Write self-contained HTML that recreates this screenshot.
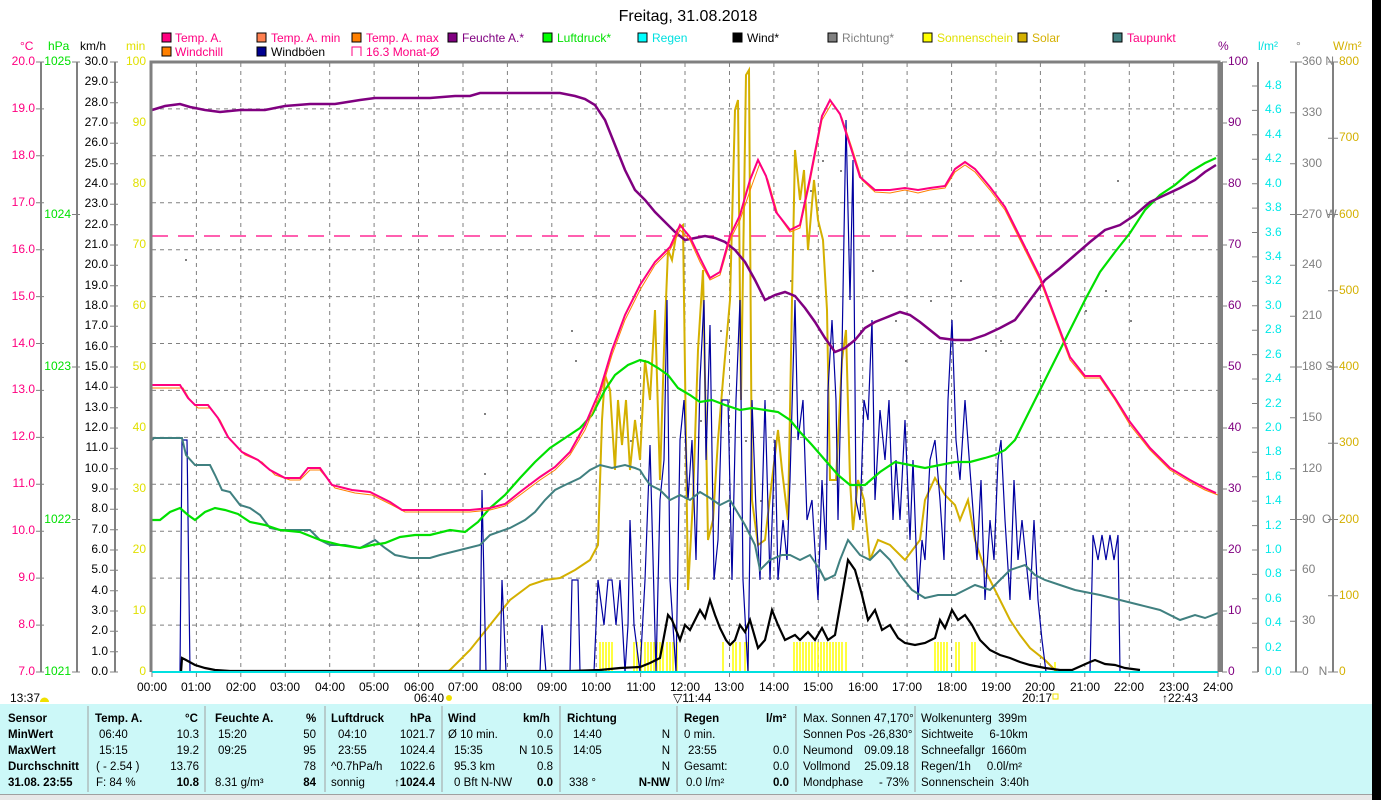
<!DOCTYPE html>
<html><head><meta charset="utf-8"><style>
html,body{margin:0;padding:0;background:#fff;width:1381px;height:800px;overflow:hidden}
svg{display:block}
text{font-family:"Liberation Sans",sans-serif;font-size:12px}
.tb text{font-size:11.5px}
</style></head><body>
<svg width="1381" height="800" viewBox="0 0 1381 800" xmlns="http://www.w3.org/2000/svg">
<rect x="1372" y="0" width="9" height="800" fill="#000"/>
<text x="688" y="21" text-anchor="middle" style="font-size:16px">Freitag, 31.08.2018</text>
<g style="font-size:11.5px">
<rect x="162" y="33" width="9" height="9" fill="#ff0080" stroke="#000"/><text x="175" y="42" fill="#ff0080">Temp. A.</text>
<rect x="257" y="33" width="9" height="9" fill="#ff8050" stroke="#000"/><text x="271" y="42" fill="#ff0080">Temp. A. min</text>
<rect x="352" y="33" width="9" height="9" fill="#ff8000" stroke="#000"/><text x="366" y="42" fill="#ff0080">Temp. A. max</text>
<rect x="448" y="33" width="9" height="9" fill="#800080" stroke="#000"/><text x="462" y="42" fill="#800080">Feuchte A.*</text>
<rect x="543" y="33" width="9" height="9" fill="#00ff00" stroke="#000"/><text x="557" y="42" fill="#00e000">Luftdruck*</text>
<rect x="638" y="33" width="9" height="9" fill="#00ffff" stroke="#000"/><text x="652" y="42" fill="#00e0e0">Regen</text>
<rect x="733" y="33" width="9" height="9" fill="#000" stroke="#000"/><text x="747" y="42">Wind*</text>
<rect x="828" y="33" width="9" height="9" fill="#808080" stroke="#000"/><text x="842" y="42" fill="#808080">Richtung*</text>
<rect x="923" y="33" width="9" height="9" fill="#ffff00" stroke="#000"/><text x="937" y="42" fill="#e0e000">Sonnenschein</text>
<rect x="1018" y="33" width="9" height="9" fill="#d4b000" stroke="#000"/><text x="1032" y="42" fill="#d4b000">Solar</text>
<rect x="1113" y="33" width="9" height="9" fill="#408080" stroke="#000"/><text x="1127" y="42" fill="#ff0080">Taupunkt</text>
<rect x="162" y="47" width="9" height="9" fill="#ff8000" stroke="#000"/><text x="175" y="56" fill="#ff0080">Windchill</text>
<rect x="257" y="47" width="9" height="9" fill="#000090" stroke="#000"/><text x="271" y="56">Windböen</text>
<path d="M352 56V47h9v9" fill="none" stroke="#ff0080"/><text x="366" y="56" fill="#ff0080">16.3 Monat-Ø</text>
</g>
<g style="font-size:11.5px">
<text x="20" y="50" fill="#ff0080">°C</text><text x="48" y="50" fill="#00e000">hPa</text><text x="80" y="50">km/h</text><text x="126" y="50" fill="#e0e000">min</text>
<text x="1218" y="50" fill="#800080">%</text><text x="1258" y="50" fill="#00e0e0">l/m²</text><text x="1296" y="50" fill="#808080">°</text><text x="1333" y="50" fill="#d4b000">W/m²</text>
</g>
<g stroke="#808080" stroke-width="2" fill="none">
<path d="M41 62V672M77 62V672M115 62V672M1258 62V672M1296 62V672M1333 62V672"/>
<path d="M36 62h8M36 108.9h8M36 155.8h8M36 202.8h8M36 249.7h8M36 296.6h8M36 343.5h8M36 390.4h8M36 437.4h8M36 484.3h8M36 531.2h8M36 578.1h8M36 625.1h8M36 672h8" stroke-width="1"/>
<path d="M72 62h8M72 214.5h8M72 367h8M72 519.5h8M72 672h8" stroke-width="1"/>
<path d="M1290 62h12M1290 112.8h6M1290 163.7h6M1290 214.5h12M1290 265.3h6M1290 316.2h6M1290 367h12M1290 417.8h6M1290 468.7h6M1290 519.5h12M1290 570.3h6M1290 621.2h6M1290 672h12" stroke-width="1"/>
<path d="M1328 62h10M1328 138.3h10M1328 214.5h10M1328 290.8h10M1328 367h10M1328 443.3h10M1328 519.5h10M1328 595.8h10M1328 672h10" stroke-width="1"/>
</g>
<g fill="#ff0080" text-anchor="end" dominant-baseline="middle">
<text x="35" y="62">20.0</text><text x="35" y="109">19.0</text><text x="35" y="156">18.0</text><text x="35" y="203">17.0</text><text x="35" y="250">16.0</text><text x="35" y="297">15.0</text><text x="35" y="344">14.0</text><text x="35" y="390">13.0</text><text x="35" y="437">12.0</text><text x="35" y="484">11.0</text><text x="35" y="531">10.0</text><text x="35" y="578">9.0</text><text x="35" y="625">8.0</text><text x="35" y="672">7.0</text>
</g>
<g fill="#00e000" text-anchor="end" dominant-baseline="middle">
<text x="71" y="62">1025</text><text x="71" y="215">1024</text><text x="71" y="367">1023</text><text x="71" y="520">1022</text><text x="71" y="672">1021</text>
</g>
<g text-anchor="end" dominant-baseline="middle">
<path d="M110 62h8M110 82.3h8M110 102.7h8M110 123h8M110 143.3h8M110 163.7h8M110 184h8M110 204.3h8M110 224.7h8M110 245h8M110 265.3h8M110 285.7h8M110 306h8M110 326.3h8M110 346.7h8M110 367h8M110 387.3h8M110 407.7h8M110 428h8M110 448.3h8M110 468.7h8M110 489h8M110 509.3h8M110 529.7h8M110 550h8M110 570.3h8M110 590.7h8M110 611h8M110 631.3h8M110 651.7h8M110 672h8" stroke="#808080"/>
<text x="108" y="62">30.0</text><text x="108" y="82">29.0</text><text x="108" y="103">28.0</text><text x="108" y="123">27.0</text><text x="108" y="143">26.0</text><text x="108" y="164">25.0</text><text x="108" y="184">24.0</text><text x="108" y="204">23.0</text><text x="108" y="225">22.0</text><text x="108" y="245">21.0</text><text x="108" y="265">20.0</text><text x="108" y="286">19.0</text><text x="108" y="306">18.0</text><text x="108" y="326">17.0</text><text x="108" y="347">16.0</text><text x="108" y="367">15.0</text><text x="108" y="387">14.0</text><text x="108" y="408">13.0</text><text x="108" y="428">12.0</text><text x="108" y="448">11.0</text><text x="108" y="469">10.0</text><text x="108" y="489">9.0</text><text x="108" y="509">8.0</text><text x="108" y="530">7.0</text><text x="108" y="550">6.0</text><text x="108" y="570">5.0</text><text x="108" y="591">4.0</text><text x="108" y="611">3.0</text><text x="108" y="631">2.0</text><text x="108" y="652">1.0</text><text x="108" y="672">0.0</text>
</g>
<g fill="#e0e000" text-anchor="end" dominant-baseline="middle">
<text x="146" y="62">100</text><text x="146" y="123">90</text><text x="146" y="184">80</text><text x="146" y="245">70</text><text x="146" y="306">60</text><text x="146" y="367">50</text><text x="146" y="428">40</text><text x="146" y="489">30</text><text x="146" y="550">20</text><text x="146" y="611">10</text><text x="146" y="672">0</text>
</g>
<g fill="#800080" dominant-baseline="middle">
<path d="M1222 62h5M1222 123h5M1222 184h5M1222 245h5M1222 306h5M1222 367h5M1222 428h5M1222 489h5M1222 550h5M1222 611h5M1222 672h5" stroke="#808080"/>
<text x="1228" y="62">100</text><text x="1228" y="123">90</text><text x="1228" y="184">80</text><text x="1228" y="245">70</text><text x="1228" y="306">60</text><text x="1228" y="367">50</text><text x="1228" y="428">40</text><text x="1228" y="489">30</text><text x="1228" y="550">20</text><text x="1228" y="611">10</text><text x="1228" y="672">0</text>
</g>
<g fill="#00e8e8" dominant-baseline="middle">
<path d="M1252 86h6M1252 110.4h6M1252 134.8h6M1252 159.3h6M1252 183.7h6M1252 208.1h6M1252 232.5h6M1252 256.9h6M1252 281.4h6M1252 305.8h6M1252 330.2h6M1252 354.6h6M1252 379h6M1252 403.5h6M1252 427.9h6M1252 452.3h6M1252 476.7h6M1252 501.1h6M1252 525.6h6M1252 550h6M1252 574.4h6M1252 598.8h6M1252 623.2h6M1252 647.7h6M1252 672h6" stroke="#808080"/>
<text x="1265" y="86">4.8</text><text x="1265" y="110">4.6</text><text x="1265" y="135">4.4</text><text x="1265" y="159">4.2</text><text x="1265" y="184">4.0</text><text x="1265" y="208">3.8</text><text x="1265" y="233">3.6</text><text x="1265" y="257">3.4</text><text x="1265" y="281">3.2</text><text x="1265" y="306">3.0</text><text x="1265" y="330">2.8</text><text x="1265" y="355">2.6</text><text x="1265" y="379">2.4</text><text x="1265" y="404">2.2</text><text x="1265" y="428">2.0</text><text x="1265" y="452">1.8</text><text x="1265" y="477">1.6</text><text x="1265" y="501">1.4</text><text x="1265" y="526">1.2</text><text x="1265" y="550">1.0</text><text x="1265" y="574">0.8</text><text x="1265" y="599">0.6</text><text x="1265" y="623">0.4</text><text x="1265" y="648">0.2</text><text x="1265" y="672">0.0</text>
</g>
<g fill="#808080" dominant-baseline="middle">
<text x="1302" y="62">360 N</text><text x="1302" y="113">330</text><text x="1302" y="164">300</text><text x="1302" y="215">270 W</text><text x="1302" y="265">240</text><text x="1302" y="316">210</text><text x="1302" y="367">180 S</text><text x="1302" y="418">150</text><text x="1302" y="469">120</text><text x="1302" y="520">90&#160;&#160;O</text><text x="1302" y="570">60</text><text x="1302" y="621">30</text><text x="1302" y="672">0&#160;&#160;&#160;N</text>
</g>
<g fill="#d4b000" dominant-baseline="middle">
<text x="1339" y="62">800</text><text x="1339" y="138">700</text><text x="1339" y="215">600</text><text x="1339" y="291">500</text><text x="1339" y="367">400</text><text x="1339" y="443">300</text><text x="1339" y="520">200</text><text x="1339" y="596">100</text><text x="1339" y="672">0</text>
</g>
<g stroke="#808080" stroke-dasharray="4,4" stroke-width="1">
<path d="M196.4 63V672M240.8 63V672M285.3 63V672M329.7 63V672M374.1 63V672M418.5 63V672M463 63V672M507.4 63V672M551.8 63V672M596.2 63V672M640.6 63V672M685 63V672M729.5 63V672M773.9 63V672M818.3 63V672M862.7 63V672M907.1 63V672M951.6 63V672M996 63V672M1040.4 63V672M1084.8 63V672M1129.3 63V672M1173.7 63V672"/>
<path d="M152 108.9H1218M152 155.8H1218M152 202.8H1218M152 249.7H1218M152 296.6H1218M152 343.5H1218M152 390.4H1218M152 437.4H1218M152 484.3H1218M152 531.2H1218M152 578.1H1218M152 625.1H1218"/>
</g>
<path d="M152 236H1218" stroke="#ff0080" stroke-dasharray="16,10" stroke-width="1.2"/>
<!-- direction dots -->
<g fill="#808080">
<rect x="185" y="259" width="2" height="2"/><rect x="484" y="413" width="2" height="2"/><rect x="484" y="473" width="2" height="2"/><rect x="571" y="330" width="2" height="2"/><rect x="575" y="360" width="2" height="2"/><rect x="610" y="380" width="2" height="2"/><rect x="630" y="440" width="2" height="2"/><rect x="665" y="310" width="2" height="2"/><rect x="700" y="420" width="2" height="2"/><rect x="720" y="330" width="2" height="2"/><rect x="745" y="440" width="2" height="2"/><rect x="760" y="500" width="2" height="2"/><rect x="790" y="280" width="2" height="2"/><rect x="810" y="190" width="2" height="2"/><rect x="822" y="160" width="2" height="2"/><rect x="840" y="170" width="2" height="2"/><rect x="860" y="330" width="2" height="2"/><rect x="872" y="270" width="2" height="2"/><rect x="895" y="320" width="2" height="2"/><rect x="905" y="360" width="2" height="2"/><rect x="930" y="300" width="2" height="2"/><rect x="960" y="280" width="2" height="2"/><rect x="985" y="350" width="2" height="2"/><rect x="1000" y="340" width="2" height="2"/><rect x="1040" y="380" width="2" height="2"/><rect x="1085" y="310" width="2" height="2"/><rect x="1105" y="290" width="2" height="2"/><rect x="1117" y="180" width="2" height="2"/><rect x="1130" y="320" width="2" height="2"/>
</g>
<g stroke="#808080"><path d="M152 672v5M196.4 672v5M240.8 672v5M285.3 672v5M329.7 672v5M374.1 672v5M418.5 672v5M463 672v5M507.4 672v5M551.8 672v5M596.2 672v5M640.6 672v5M685 672v5M729.5 672v5M773.9 672v5M818.3 672v5M862.7 672v5M907.1 672v5M951.6 672v5M996 672v5M1040.4 672v5M1084.8 672v5M1129.3 672v5M1173.7 672v5M1218 672v5"/></g>
<g text-anchor="middle"><text x="152" y="691">00:00</text><text x="196" y="691">01:00</text><text x="241" y="691">02:00</text><text x="285" y="691">03:00</text><text x="330" y="691">04:00</text><text x="374" y="691">05:00</text><text x="419" y="691">06:00</text><text x="463" y="691">07:00</text><text x="507" y="691">08:00</text><text x="552" y="691">09:00</text><text x="596" y="691">10:00</text><text x="641" y="691">11:00</text><text x="685" y="691">12:00</text><text x="729" y="691">13:00</text><text x="774" y="691">14:00</text><text x="818" y="691">15:00</text><text x="863" y="691">16:00</text><text x="907" y="691">17:00</text><text x="952" y="691">18:00</text><text x="996" y="691">19:00</text><text x="1040" y="691">20:00</text><text x="1085" y="691">21:00</text><text x="1129" y="691">22:00</text><text x="1174" y="691">23:00</text><text x="1218" y="691">24:00</text></g>
<g style="font-size:11.5px"><text x="10" y="702">13:37</text><path d="M40 702a4 4 0 0 1 9 0z" fill="#f0e000"/>
<text x="414" y="702">06:40</text><circle cx="449" cy="698" r="3" fill="#f0e000"/>
<text x="673" y="702">▽11:44</text><text x="1022" y="702">20:17</text><rect x="1053" y="694" width="5" height="5" fill="none" stroke="#f0e000"/><text x="1162" y="702" fill="#000">↑22:43</text></g>
<g stroke="#ffff00" stroke-width="1.5">
<path d="M600 642v30M603 642v30M606 642v30M609 642v30M612 642v30M634 642v30M637 642v30M641 642v30M645 642v30M648 642v30M651 642v30M654 642v30M657 642v30M660 642v30M663 642v30M667 642v30M670 642v30M673 642v30M677 642v30M723 642v30M733 642v30M736 642v30M740 642v30M745 642v30M748 642v30M794 642v30M797 642v30M800 642v30M803 642v30M806 642v30M809 642v30M812 642v30M815 642v30M818 642v30M821 642v30M824 642v30M827 642v30M830 642v30M833 642v30M836 642v30M839 642v30M842 642v30M846 642v30M935 642v30M938 642v30M941 642v30M944 642v30M947 642v30M956 642v30M959 642v30M972 642v30M975 642v30M1055 662v10"/>
</g>
<polyline fill="none" stroke="#d4b000" stroke-width="2" points="447,672 450,670 470,650 490,625 510,600 530,585 545,580 560,578 575,570 590,560 598,545 602,420 605,375 610,390 615,470 618,400 622,445 626,400 630,470 635,420 640,460 645,360 650,400 655,310 660,480 664,350 668,250 672,260 677,230 683,225 688,590 693,500 698,350 703,270 708,540 713,520 718,440 723,380 730,300 735,110 738,100 741,400 746,75 749,70 752,500 758,545 765,540 772,480 778,430 782,470 788,520 792,300 795,150 800,200 804,170 808,250 814,180 818,220 823,240 827,310 830,480 836,480 842,360 846,330 850,480 853,530 858,480 864,500 870,560 878,540 890,545 905,560 920,540 925,500 935,478 945,495 955,505 960,520 968,500 975,540 985,570 1000,600 1010,620 1020,635 1030,648 1045,660 1057,672"/>
<polyline fill="none" stroke="#0000a0" stroke-width="1.2" points="152,672 180,672 182,440 187,440 190,672 480,672 482,490 486,672 500,672 502,580 506,672 540,672 542,625 546,672 570,672 572,580 578,580 580,672 594,672 598,580 604,625 608,580 612,580 616,625 620,580 625,672 628,625 630,520 634,625 640,672 645,580 650,445 656,672 660,500 664,460 667,300 670,580 676,672 680,440 684,400 688,500 692,440 696,560 700,380 704,300 706,460 710,325 714,580 718,540 722,400 728,400 732,580 736,400 740,300 743,580 748,672 752,400 756,510 760,580 765,400 770,580 775,440 778,580 783,520 787,560 790,480 795,300 798,440 803,400 807,520 812,500 818,600 822,480 826,550 828,390 832,320 836,400 838,520 842,350 846,120 850,300 853,160 856,500 860,520 864,400 868,420 872,320 875,500 880,410 885,460 889,400 893,520 896,460 900,520 905,420 910,540 913,460 918,600 922,540 925,560 930,460 935,440 940,500 944,560 948,400 952,320 956,440 960,480 965,400 970,470 973,510 977,560 981,480 985,600 990,520 994,560 998,460 1001,440 1005,520 1010,600 1014,480 1018,560 1022,520 1026,560 1030,600 1034,520 1038,600 1042,640 1046,672 1090,672 1093,535 1098,560 1102,535 1106,560 1110,535 1114,560 1118,535 1120,672 1218,672"/>
<polyline fill="none" stroke="#408080" stroke-width="2" points="152,440 154,438 182,438 186,455 195,465 210,465 215,475 222,490 230,492 240,505 250,508 260,515 270,528 280,530 295,530 310,530 320,540 330,545 345,545 360,548 375,540 385,548 395,555 410,558 430,558 440,555 460,550 480,545 490,535 510,528 525,520 535,512 545,500 555,490 565,485 580,478 590,470 600,465 612,468 625,465 635,468 640,470 645,478 650,485 660,490 670,500 680,495 690,500 700,492 710,498 720,505 730,500 745,525 755,545 760,570 770,560 782,555 790,555 800,560 810,555 820,570 825,580 835,575 840,560 848,540 852,545 860,555 870,560 880,550 890,560 900,575 912,590 925,598 938,595 955,595 965,590 975,585 990,590 1000,580 1010,570 1025,565 1035,575 1045,580 1060,585 1075,590 1100,595 1120,600 1140,605 1160,610 1180,620 1195,615 1205,618 1218,613"/>
<polyline fill="none" stroke="#00e000" stroke-width="2.2" points="152,520 160,520 170,512 180,508 188,515 195,520 205,512 215,508 225,510 238,514 250,522 265,525 280,530 300,532 320,540 340,545 360,548 372,545 385,543 400,537 415,535 430,535 450,530 465,532 478,522 490,508 505,495 520,478 535,462 550,448 565,438 580,428 592,415 605,390 615,375 628,365 640,360 648,362 658,368 668,375 678,388 690,395 700,402 712,400 725,405 740,410 752,408 765,410 778,412 790,420 800,432 812,445 825,460 838,475 850,485 865,485 880,472 895,462 910,465 925,468 940,465 955,462 970,462 985,458 995,455 1005,450 1015,440 1025,420 1040,390 1055,360 1070,330 1085,300 1100,272 1115,252 1130,233 1145,210 1160,195 1175,185 1190,172 1205,163 1216,158"/>
<polyline fill="none" stroke="#800080" stroke-width="2.5" points="152,110 165,106 180,104 190,107 205,110 220,112 240,110 265,110 285,106 310,104 335,104 360,100 375,98 400,98 430,98 455,96 470,96 480,93 500,93 530,93 560,93 575,96 585,99 595,105 605,120 615,145 625,170 635,190 645,200 655,212 665,222 675,232 685,240 695,238 705,236 715,238 725,242 735,250 745,262 755,280 765,300 775,295 785,292 795,296 805,308 815,322 825,338 835,352 845,348 855,340 865,328 875,322 885,318 900,312 910,315 920,322 930,330 940,338 955,340 970,340 985,335 1000,328 1015,320 1030,300 1045,280 1060,268 1075,255 1090,242 1105,230 1120,225 1135,215 1150,202 1165,195 1180,188 1195,180 1205,172 1216,165"/>
<g fill="none">
<polyline stroke="#ff8000" stroke-width="1" points="152,388 183,388 190,400 198,408 210,408 220,420 230,440 245,455 262,462 275,475 290,480 300,480 310,470 320,470 335,488 355,493 372,495 382,500 392,505 405,512 420,512 445,512 455,512 470,512 490,510 505,506 520,495 540,480 555,470 570,455 585,430 600,395 612,355 625,320 640,290 655,265 670,250 680,230 690,240 700,262 710,280 720,275 730,240 740,220 752,185 760,163 768,180 778,215 790,232 800,228 810,182 822,120 832,103 842,118 852,148 862,180 875,192 890,193 905,190 918,193 930,190 945,188 955,172 965,165 975,172 990,190 1005,210 1020,240 1040,280 1055,320 1070,360 1085,378 1100,378 1115,400 1130,425 1150,450 1170,470 1190,482 1205,490 1218,495"/>
<polyline stroke="#ff0080" stroke-width="2" points="152,385 180,385 188,398 195,405 208,405 218,418 228,437 242,452 258,460 270,470 285,478 300,478 308,468 320,468 332,485 352,490 370,492 380,497 390,502 402,510 420,510 445,510 455,510 470,510 490,508 505,504 520,492 540,477 555,467 570,452 585,425 600,390 612,350 625,315 640,285 655,262 670,247 680,225 690,237 700,258 710,278 720,272 730,236 740,215 750,180 758,160 766,176 776,212 790,230 800,225 810,178 822,116 830,100 840,114 850,145 860,177 875,190 890,190 905,188 918,190 930,188 945,186 955,169 965,162 975,169 990,187 1005,207 1020,237 1040,277 1055,317 1070,357 1085,376 1100,376 1115,398 1130,422 1150,448 1170,468 1190,480 1205,488 1216,493"/>
</g>
<polyline fill="none" stroke="#000" stroke-width="2.2" points="181,672 182,658 186,660 195,665 205,668 215,670 230,671 570,671 600,670 620,668 640,667 650,663 660,658 668,615 672,620 680,640 685,625 690,630 700,610 705,618 710,600 715,615 720,628 726,640 730,645 735,640 740,625 745,632 750,620 758,648 765,640 772,610 778,625 785,640 795,635 800,640 808,632 815,640 822,628 828,640 835,635 842,595 848,560 855,570 862,595 868,620 875,610 882,630 890,625 898,638 905,643 915,645 925,643 935,638 940,620 945,628 952,610 958,620 965,615 972,625 980,640 990,650 1000,655 1010,658 1020,662 1030,665 1045,668 1060,670 1072,670 1090,662 1095,660 1105,664 1115,665 1125,668 1140,670"/>
<path d="M152 672H1218" stroke="#00e0e0" stroke-width="2"/>
<path d="M151 672V62H1219V672M1221.5 62V672" fill="none" stroke="#808080" stroke-width="3"/>
<rect x="0" y="704" width="1372" height="90" fill="#ccf8f8"/>
<rect x="0" y="794" width="1372" height="6" fill="#e8e8e8"/>
<path d="M0 794.5H1372" stroke="#a0a0a0"/>
<g stroke="#a0a0a0"><path d="M88 706V792M205 706V792M325 706V792M442 706V792M560 706V792M677 706V792M796 706V792M915 706V792"/></g>
<g class="tb">
<g font-weight="bold"><text x="8" y="722">Sensor</text><text x="8" y="738">MinWert</text><text x="8" y="754">MaxWert</text><text x="8" y="770">Durchschnitt</text><text x="8" y="786">31.08. 23:55</text>
<text x="95" y="722">Temp. A.</text><text x="185" y="722">°C</text><text x="215" y="722">Feuchte A.</text><text x="306" y="722">%</text><text x="331" y="722">Luftdruck</text><text x="410" y="722">hPa</text><text x="448" y="722">Wind</text><text x="523" y="722">km/h</text><text x="567" y="722">Richtung</text><text x="684" y="722">Regen</text><text x="766" y="722">l/m²</text></g>
<text x="99" y="738">06:40</text><text x="199" y="738" text-anchor="end">10.3</text>
<text x="99" y="754">15:15</text><text x="199" y="754" text-anchor="end">19.2</text>
<text x="96" y="770">( - 2.54 )</text><text x="199" y="770" text-anchor="end">13.76</text>
<text x="96" y="786">F: 84 %</text><text x="199" y="786" text-anchor="end" font-weight="bold">10.8</text>
<text x="218" y="738">15:20</text><text x="316" y="738" text-anchor="end">50</text>
<text x="218" y="754">09:25</text><text x="316" y="754" text-anchor="end">95</text>
<text x="316" y="770" text-anchor="end">78</text>
<text x="215" y="786">8.31 g/m³</text><text x="316" y="786" text-anchor="end" font-weight="bold">84</text>
<text x="338" y="738">04:10</text><text x="435" y="738" text-anchor="end">1021.7</text>
<text x="338" y="754">23:55</text><text x="435" y="754" text-anchor="end">1024.4</text>
<text x="331" y="770">^0.7hPa/h</text><text x="435" y="770" text-anchor="end">1022.6</text>
<text x="331" y="786">sonnig</text><text x="435" y="786" text-anchor="end" font-weight="bold">↑1024.4</text>
<text x="448" y="738">Ø 10 min.</text><text x="553" y="738" text-anchor="end">0.0</text>
<text x="454" y="754">15:35</text><text x="553" y="754" text-anchor="end">N 10.5</text>
<text x="454" y="770">95.3 km</text><text x="553" y="770" text-anchor="end">0.8</text>
<text x="454" y="786">0 Bft N-NW</text><text x="553" y="786" text-anchor="end" font-weight="bold">0.0</text>
<text x="573" y="738">14:40</text><text x="670" y="738" text-anchor="end">N</text>
<text x="573" y="754">14:05</text><text x="670" y="754" text-anchor="end">N</text>
<text x="670" y="770" text-anchor="end">N</text>
<text x="569" y="786">338 °</text><text x="670" y="786" text-anchor="end" font-weight="bold">N-NW</text>
<text x="684" y="738">0 min.</text>
<text x="688" y="754">23:55</text><text x="789" y="754" text-anchor="end">0.0</text>
<text x="684" y="770">Gesamt:</text><text x="789" y="770" text-anchor="end">0.0</text>
<text x="686" y="786">0.0 l/m²</text><text x="789" y="786" text-anchor="end" font-weight="bold">0.0</text>
<text x="803" y="722">Max. Sonnen 47,170°</text>
<text x="803" y="738">Sonnen Pos -26,830°</text>
<text x="803" y="754">Neumond</text><text x="909" y="754" text-anchor="end">09.09.18</text>
<text x="803" y="770">Vollmond</text><text x="909" y="770" text-anchor="end">25.09.18</text>
<text x="803" y="786">Mondphase</text><text x="909" y="786" text-anchor="end">- 73%</text>
<text x="921" y="722">Wolkenunterg&#160;&#160;399m</text>
<text x="921" y="738">Sichtweite&#160;&#160;&#160;&#160;&#160;6-10km</text>
<text x="921" y="754">Schneefallgr&#160;&#160;1660m</text>
<text x="921" y="770">Regen/1h&#160;&#160;&#160;&#160;&#160;0.0l/m²</text>
<text x="921" y="786">Sonnenschein&#160;&#160;3:40h</text>
</g>
</svg>
</body></html>
